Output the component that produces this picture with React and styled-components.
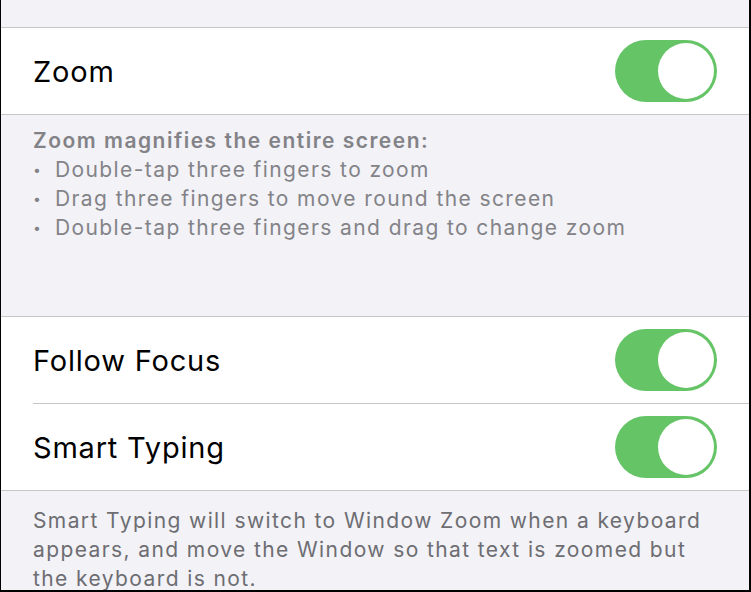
import React from 'react';
import styled, { createGlobalStyle } from 'styled-components';

const GlobalStyle = createGlobalStyle`
  html, body {
    margin: 0;
    padding: 0;
    background: #f2f2f7;
  }
  * { box-sizing: border-box; }
`;

const Screen = styled.div`
  width: 751px;
  height: 592px;
  overflow: hidden;
  background: #f2f2f7;
  border-left: 1px solid #000;
  border-right: 2px solid #000;
  border-bottom: 2px solid #000;
  font-family: Inter, "Noto Sans", sans-serif;
  display: flex;
  flex-direction: column;
`;

const TopGap = styled.div`
  height: 27px;
  flex-shrink: 0;
`;

const Group = styled.div`
  background: #fff;
  border-top: 1px solid #c6c6c8;
  border-bottom: 1px solid #c6c6c8;
  flex-shrink: 0;
`;

const Row = styled.div`
  height: ${p => (p.$divider ? 87 : 86)}px;
  margin-left: 32px;
  padding-right: 32px;
  display: flex;
  align-items: center;
  justify-content: space-between;
  border-bottom: ${p => (p.$divider ? '1px solid #c6c6c8' : 'none')};
`;

const Label = styled.span`
  font-size: 29px;
  color: #000;
  letter-spacing: 0.8px;
  padding-top: 1px;
`;

const Track = styled.div`
  width: 102px;
  height: 62px;
  border-radius: 31px;
  background: #65c466;
  display: flex;
  align-items: center;
  justify-content: flex-end;
  padding-right: 3px;
`;

const Knob = styled.div`
  width: 56px;
  height: 56px;
  border-radius: 50%;
  background: #fff;
`;

const Footer = styled.div`
  padding: ${p => p.$pad};
  height: ${p => p.$height}px;
  flex-shrink: 0;
  font-size: 21px;
  line-height: 29px;
  color: ${p => p.$color};
  letter-spacing: 1.4px;
`;

const Heading = styled.div`
  font-weight: 600;
  letter-spacing: 1.5px;
`;

const Bullet = styled.div`
  display: flex;
  &::before {
    content: '•';
    width: 22px;
    font-size: 14px;
    letter-spacing: 0;
  }
`;

const Paragraph = styled.div``;

function Toggle() {
  return (
    <Track>
      <Knob />
    </Track>
  );
}

export default function App() {
  return (
    <Screen>
      <GlobalStyle />
      <TopGap />
      <Group>
        <Row>
          <Label>Zoom</Label>
          <Toggle />
        </Row>
      </Group>
      <Footer $pad="11px 32px 0 32px" $height={201} $color="#838387">
        <Heading>Zoom magnifies the entire screen:</Heading>
        <Bullet>Double-tap three fingers to zoom</Bullet>
        <Bullet>Drag three fingers to move round the screen</Bullet>
        <Bullet>Double-tap three fingers and drag to change zoom</Bullet>
      </Footer>
      <Group>
        <Row $divider>
          <Label>Follow Focus</Label>
          <Toggle />
        </Row>
        <Row>
          <Label>Smart Typing</Label>
          <Toggle />
        </Row>
      </Group>
      <Footer $pad="15px 32px 0 32px" $height={100} $color="#6d6d72">
        <Paragraph>
          Smart Typing will switch to Window Zoom when a keyboard appears, and move the Window so that text is zoomed but the keyboard is not.
        </Paragraph>
      </Footer>
    </Screen>
  );
}
